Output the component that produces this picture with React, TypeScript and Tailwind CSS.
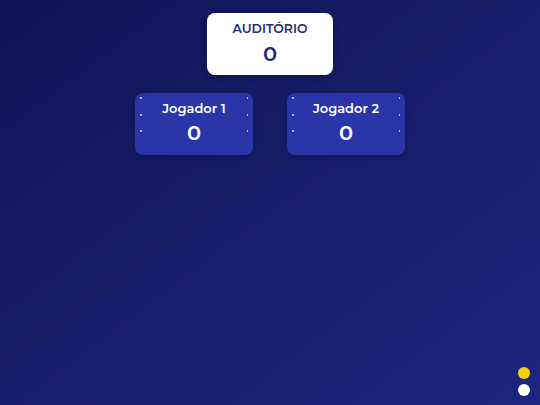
const font = { fontFamily: "Montserrat, Inter, 'Noto Sans', sans-serif" };

function PlayerCard({ name }: { name: string }) {
  return (
    <div className="relative flex h-[62px] w-[118px] flex-col items-center rounded-lg bg-[#2935a8] pt-[7px] shadow-[0_2px_6px_rgba(0,0,0,0.25)]">
      {/* little corner dots */}
      <span className="absolute left-[5px] top-[4px] h-[1.5px] w-[1.5px] bg-white/70" />
      <span className="absolute left-[5px] top-[21px] h-[1.5px] w-[1.5px] bg-white/70" />
      <span className="absolute left-[5px] top-[37px] h-[1.5px] w-[1.5px] bg-white/70" />
      <span className="absolute right-[5px] top-[4px] h-[1.5px] w-[1.5px] bg-white/70" />
      <span className="absolute right-[5px] top-[21px] h-[1.5px] w-[1.5px] bg-white/70" />
      <span className="absolute right-[5px] top-[37px] h-[1.5px] w-[1.5px] bg-white/70" />
      <div className="text-[13px] font-semibold leading-[16px] text-white">{name}</div>
      <div className="mt-[4px] text-[21px] font-semibold leading-[25px] text-white">0</div>
    </div>
  );
}

export default function App() {
  return (
    <div
      className="relative h-[405px] w-[540px] overflow-hidden bg-gradient-to-br from-[#0e1554] to-[#1c2680]"
      style={font}
    >
      <div className="flex flex-col items-center pt-[13px]">
        <div className="flex h-[62px] w-[126px] flex-col items-center rounded-lg bg-white pt-[8px] shadow-[0_2px_6px_rgba(0,0,0,0.3)]">
          <div className="text-[12.5px] font-semibold leading-[16px] text-[#232a78]">AUDITÓRIO</div>
          <div className="mt-[4px] text-[21px] font-semibold leading-[25px] text-[#232a78]">0</div>
        </div>
        <div className="mt-[18px] flex gap-[34px]">
          <PlayerCard name="Jogador 1" />
          <PlayerCard name="Jogador 2" />
        </div>
      </div>
      <div className="absolute bottom-[9px] right-[10px] flex flex-col gap-[5px]">
        <span className="h-[12px] w-[12px] rounded-full bg-[#f7d10a]" />
        <span className="h-[12px] w-[12px] rounded-full bg-white" />
      </div>
    </div>
  );
}
